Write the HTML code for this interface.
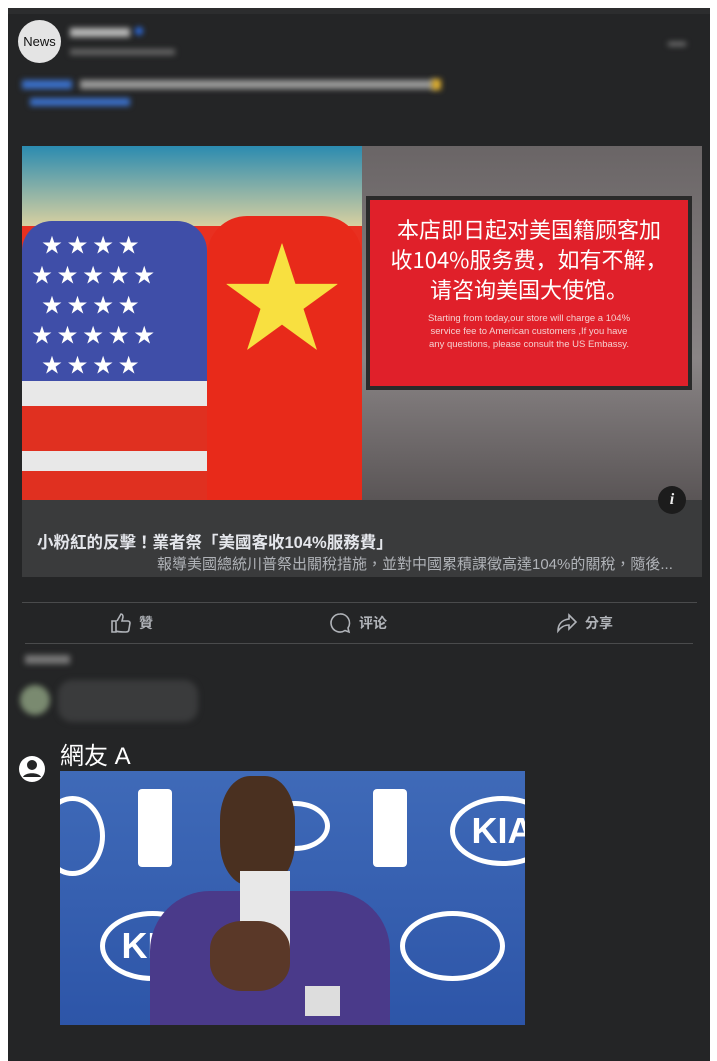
<!DOCTYPE html>
<html><head><meta charset="utf-8"><style>
body{margin:0;width:717px;height:1061px;background:#fff;position:relative;overflow:hidden;font-family:"Liberation Sans","Noto Sans CJK TC",sans-serif}
.a{position:absolute}
.blur{filter:blur(3px)}
.st{position:absolute;color:#fff;font-size:20px;line-height:1}
</style></head><body>
<div class="a" style="left:8px;top:8px;width:702px;height:1053px;background:#242526"></div>
<div class="a" style="left:8px;top:8px;width:702px;height:6px;background:#2c2d2e"></div>
<div class="a" style="left:18px;top:20px;width:43px;height:43px;border-radius:50%;background:#e4e4e4;color:#111;font-size:13px;line-height:43px;text-align:center">News</div>
<div class="a blur" style="left:70px;top:28px;width:60px;height:9px;background:#b8b8b8"></div>
<div class="a blur" style="left:135px;top:27px;width:8px;height:8px;border-radius:50%;background:#2d6ee6"></div>
<div class="a blur" style="left:70px;top:49px;width:105px;height:6px;background:#666"></div>
<div class="a blur" style="left:668px;top:42px;width:18px;height:4px;background:#777"></div>
<div class="a blur" style="left:22px;top:80px;width:50px;height:9px;background:#3a6fc8"></div>
<div class="a blur" style="left:80px;top:80px;width:355px;height:9px;background:#9a9a9a"></div>
<div class="a blur" style="left:432px;top:79px;width:9px;height:11px;background:#e0b030"></div>
<div class="a blur" style="left:30px;top:98px;width:100px;height:8px;background:#3a6fc8"></div>

<div class="a" style="left:22px;top:146px;width:340px;height:354px;background:#e83020;overflow:hidden">
 <div class="a" style="left:0;top:0;width:340px;height:80px;background:linear-gradient(180deg,#2b8bb0,#d8d0a0)"></div>
 <div class="a" style="left:0;top:75px;width:185px;height:280px;border-radius:30px 30px 0 0;background:linear-gradient(180deg,#3f4ea8 0,#3f4ea8 160px,#e8e8e8 160px,#e8e8e8 185px,#e03020 185px,#e03020 230px,#e8e8e8 230px,#e8e8e8 250px,#e03020 250px)"></div>
 <div class="st" style="left:20px;top:90px">★ ★ ★ ★</div>
 <div class="st" style="left:10px;top:120px">★ ★ ★ ★ ★</div>
 <div class="st" style="left:20px;top:150px">★ ★ ★ ★</div>
 <div class="st" style="left:10px;top:180px">★ ★ ★ ★ ★</div>
 <div class="st" style="left:20px;top:210px">★ ★ ★ ★</div>
 <div class="a" style="left:185px;top:70px;width:155px;height:290px;border-radius:40px 40px 0 0;background:#e82a1a"></div>
 <div class="a" style="left:200px;top:95px;color:#f8e040;font-size:120px;line-height:1">★</div>
</div>
<div class="a" style="left:362px;top:146px;width:340px;height:354px;background:linear-gradient(180deg,#6a6566,#8a8586 60%,#5a5556)">
 <div class="a" style="left:4px;top:50px;width:326px;height:194px;background:#2a2a2a"></div>
 <div class="a" style="left:8px;top:54px;width:318px;height:186px;background:#e0202a;color:#fff;text-align:center">
  <div style="font-size:22px;line-height:30px;margin-top:14px;font-family:'Noto Sans CJK SC',sans-serif">本店即日起对美国籍顾客加<br>收104%服务费，如有不解，<br>请咨询美国大使馆。</div>
  <div style="font-size:9.5px;line-height:13px;margin-top:8px;color:#f5d0d0">Starting from today,our store will charge a 104%<br>service fee to American customers ,If you have<br>any questions, please consult the US Embassy.</div>
 </div>
</div>
<div class="a" style="left:22px;top:500px;width:680px;height:77px;background:#3a3b3c"></div>
<div class="a" style="left:658px;top:486px;width:28px;height:28px;border-radius:50%;background:#1c1c1c;color:#eee;font-size:16px;font-weight:bold;font-style:italic;text-align:center;line-height:28px;font-family:'Liberation Serif',serif">i</div>
<div class="a" style="left:37px;top:529px;color:#e4e6eb;font-size:16.5px;font-weight:bold">小粉紅的反擊！業者祭「美國客收104%服務費」</div>
<div class="a" style="left:157px;top:553px;color:#b0b3b8;font-size:15px">報導美國總統川普祭出關稅措施，並對中國累積課徵高達104%的關稅，隨後...</div>

<div class="a" style="left:22px;top:602px;width:675px;height:1px;background:#4a4b4c"></div>
<div class="a" style="left:25px;top:643px;width:668px;height:1px;background:#4a4b4c"></div>
<svg class="a" style="left:110px;top:612px" width="22" height="22" viewBox="0 0 22 22" fill="none" stroke="#b0b3b8" stroke-width="1.6"><path d="M2 9h4v11H2zM6 19c2 1 4 1 10 1 2 0 3-1 3-3l1-6c0-1-1-2-2-2h-6l1-4c0-2-1-3-2-3L7 9"/></svg>
<div class="a" style="left:139px;top:613px;color:#b0b3b8;font-size:14px;font-weight:bold">贊</div>
<svg class="a" style="left:329px;top:612px" width="22" height="22" viewBox="0 0 22 22" fill="none" stroke="#b0b3b8" stroke-width="1.6"><path d="M11 2a9 9 0 1 0 5 16.5l4 1.5-1-4A9 9 0 0 0 11 2z"/></svg>
<div class="a" style="left:359px;top:613px;color:#b0b3b8;font-size:14px;font-weight:bold">评论</div>
<svg class="a" style="left:556px;top:612px" width="22" height="22" viewBox="0 0 22 22" fill="none" stroke="#b0b3b8" stroke-width="1.6"><path d="M13 3l7 7-7 7v-4c-5 0-8 2-11 6 0-6 3-11 11-12z"/></svg>
<div class="a" style="left:585px;top:613px;color:#b0b3b8;font-size:14px;font-weight:bold">分享</div>

<div class="a blur" style="left:25px;top:655px;width:45px;height:9px;background:#777"></div>
<div class="a blur" style="left:20px;top:685px;width:30px;height:30px;border-radius:50%;background:#7a8a70"></div>
<div class="a blur" style="left:58px;top:680px;width:140px;height:42px;border-radius:14px;background:#3a3b3c"></div>

<div class="a" style="left:60px;top:736px;color:#fff;font-size:24px">網友 A</div>
<svg class="a" style="left:18px;top:755px" width="28" height="28" viewBox="0 0 28 28"><circle cx="14" cy="14" r="13" fill="#fff"/><circle cx="14" cy="10" r="5" fill="#242526"/><path d="M5 22c2-5 16-5 18 0" fill="#242526"/></svg>

<div class="a" style="left:60px;top:771px;width:465px;height:254px;background:linear-gradient(180deg,#3f6ab8,#2d55a8);overflow:hidden">
 <div class="a" style="left:-20px;top:25px;width:55px;height:70px;border-radius:50%;border:5px solid #fff"></div>
 <div class="a" style="left:78px;top:18px;width:34px;height:78px;background:#fff;border-radius:4px"></div>
 <div class="a" style="left:313px;top:18px;width:34px;height:78px;background:#fff;border-radius:4px"></div>
 <div class="a" style="left:390px;top:25px;width:95px;height:60px;border-radius:50%;border:5px solid #fff;color:#fff;font-weight:bold;font-size:36px;line-height:60px;text-align:center">KIA</div>
 <div class="a" style="left:40px;top:140px;width:95px;height:60px;border-radius:50%;border:5px solid #fff;color:#fff;font-weight:bold;font-size:36px;line-height:60px;text-align:center">KIA</div>
 <div class="a" style="left:200px;top:30px;width:60px;height:40px;border-radius:50%;border:5px solid #fff"></div>
 <div class="a" style="left:340px;top:140px;width:95px;height:60px;border-radius:50%;border:5px solid #fff"></div>
 <div class="a" style="left:90px;top:120px;width:240px;height:140px;border-radius:60px 60px 0 0;background:#4a3a8a"></div>
 <div class="a" style="left:160px;top:5px;width:75px;height:110px;border-radius:40%;background:#4a3020"></div>
 <div class="a" style="left:180px;top:100px;width:50px;height:80px;background:#e8e8e8"></div>
 <div class="a" style="left:150px;top:150px;width:80px;height:70px;border-radius:40%;background:#5a3828"></div>
 <div class="a" style="left:245px;top:215px;width:35px;height:30px;background:#ddd"></div>
</div>
</body></html>
